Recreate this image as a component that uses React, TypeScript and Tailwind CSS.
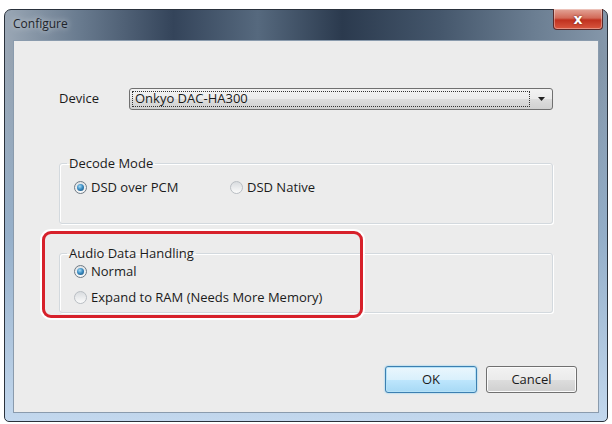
import React from 'react';

function Radio({ checked, label }: { checked?: boolean; label: string }) {
  return (
    <label className="flex items-center gap-[4px]">
      {checked ? (
        <span className="flex h-[13px] w-[13px] items-center justify-center rounded-full border border-[#6f7a84] bg-[linear-gradient(180deg,#dfe3e6,#f8f9fa)]">
          <span className="h-[7px] w-[7px] rounded-full bg-[radial-gradient(circle_at_40%_35%,#a7dcf5_0%,#3d8ec4_45%,#12466e_100%)]" />
        </span>
      ) : (
        <span className="h-[13px] w-[13px] rounded-full border border-[#b9bec3] bg-[linear-gradient(180deg,#d9dcdf,#fbfbfb)]" />
      )}
      <span className="leading-[17px]">{label}</span>
    </label>
  );
}

function Group({ title, children, className }: { title: string; children: React.ReactNode; className?: string }) {
  return (
    <fieldset
      className={
        'rounded-[3px] border border-[#d3d9de] shadow-[inset_1px_1px_0_#ffffff,1px_1px_0_#ffffff] ' + (className ?? '')
      }
    >
      <legend className="ml-[7px] px-[2px] leading-[14px]">{title}</legend>
      <div className="pl-[14px]">{children}</div>
    </fieldset>
  );
}

export default function App() {
  return (
    <div className="h-[424px] w-[612px] overflow-hidden bg-white font-['Open_Sans','Noto_Sans',sans-serif] text-[13px] text-[#1b1b1b]">
      <div className="ml-[4px] mt-[9px] flex h-[413px] w-[604px] flex-col rounded-t-[7px] rounded-b-[5px] border border-[#2a323c] bg-[linear-gradient(180deg,rgba(0,0,0,0)_0%,rgba(0,0,0,0)_12%,rgba(150,178,206,0.85)_55%,#c3d8ee_100%),linear-gradient(90deg,#9aa7b5_0%,#6a7c90_12%,#34445a_28%,#56697e_42%,#2b3a4e_56%,#44566b_72%,#6b7e92_88%,#8597aa_100%)] px-[8px] pb-[8px]">
        {/* title bar */}
        <div className="flex h-[30px] shrink-0 items-start">
          <span className="mt-[5px] text-[12px] text-[#1e242b] [text-shadow:0_0_6px_rgba(255,255,255,0.8)]">
            Configure
          </span>
          <button className="ml-auto -mr-[4px] -mt-px flex h-[21px] w-[50px] items-center justify-center rounded-b-[4px] border border-t-0 border-[#5a2a2a] bg-[linear-gradient(180deg,#e3a598_0%,#d26a58_45%,#c0311f_55%,#d9573f_100%)] shadow-[inset_0_0_0_1px_rgba(255,255,255,0.35)]">
            <span className="font-['DejaVu_Sans',sans-serif] text-[14px] font-bold leading-none text-white [text-shadow:0_0_2px_#5a1a10]">
              x
            </span>
          </button>
        </div>

        {/* client area */}
        <div className="relative flex flex-1 flex-col border border-[#8a9bad] bg-[#ececec]">
          {/* device row */}
          <div className="mt-[47px] flex h-[22px] items-center">
            <span className="ml-[45px] w-[70px]">Device</span>
            <div className="flex h-[22px] w-[424px] items-center rounded-[3px] border border-[#707070] bg-[linear-gradient(180deg,#f3f3f3_0%,#ebebeb_50%,#dddddd_51%,#d0d0d0_100%)] pl-[2px] pr-[6px]">
              <div className="flex h-[16px] flex-1 items-center border border-dotted border-[#333] pl-[2px]">
                Onkyo DAC-HA300
              </div>
              <svg width="8" height="5" viewBox="0 0 8 5" className="ml-[8px]">
                <path d="M0 0h7L3.5 4z" fill="#222" />
              </svg>
            </div>
          </div>

          {/* decode mode */}
          <Group title="Decode Mode" className="ml-[45px] mt-[46px] h-[68px] w-[494px]">
            <div className="mt-[9px] flex items-center">
              <div className="w-[156px]">
                <Radio checked label="DSD over PCM" />
              </div>
              <Radio label="DSD Native" />
            </div>
          </Group>

          {/* audio data handling */}
          <Group title="Audio Data Handling" className="ml-[45px] mt-[22px] h-[67px] w-[494px]">
            <div className="mt-[3px] flex flex-col gap-[9px]">
              <Radio checked label="Normal" />
              <Radio label="Expand to RAM (Needs More Memory)" />
            </div>
          </Group>

          {/* buttons */}
          <div className="mt-auto mb-[19px] flex justify-end gap-[9px] pr-[21px]">
            <button className="h-[27px] w-[92px] rounded-[3px] border border-[#3c7fb1] bg-[linear-gradient(180deg,#eaf6fd_0%,#d9f0fc_50%,#bee6fd_51%,#a7d9f5_100%)] shadow-[inset_0_0_0_1px_#b6e2f7,0_0_2px_#6cc4ef]">
              OK
            </button>
            <button className="h-[27px] w-[91px] rounded-[3px] border border-[#707070] bg-[linear-gradient(180deg,#f2f2f2_0%,#ebebeb_50%,#dddddd_51%,#cfcfcf_100%)] shadow-[inset_0_0_0_1px_#fbfbfb]">
              Cancel
            </button>
          </div>

          {/* annotation highlight */}
          <div className="pointer-events-none absolute left-[28px] top-[190px] h-[87px] w-[321px] rounded-[9px] border-[3px] border-[#d7212b] shadow-[0_0_0_2px_#ffffff]" />
        </div>
      </div>
    </div>
  );
}
